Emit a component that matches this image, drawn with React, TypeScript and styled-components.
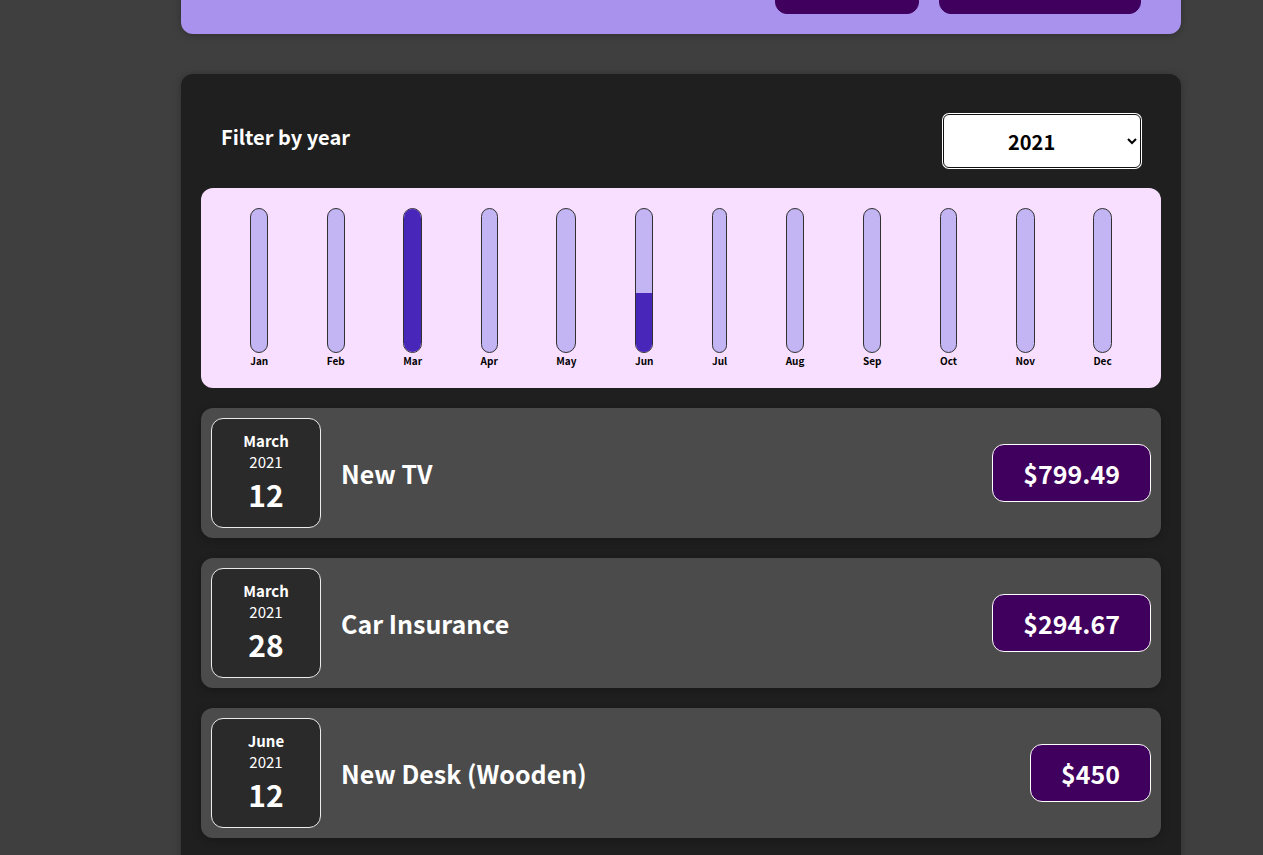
import React from 'react';
import styled, { createGlobalStyle } from 'styled-components';

const GlobalStyle = createGlobalStyle`
  * { box-sizing: border-box; }
  html {
    font-family: 'Noto Sans CJK JP', 'Noto Sans', sans-serif;
    font-size: 20px;
    overflow: hidden;
  }
  body {
    margin: 0;
    background-color: #3f3f3f;
    overflow: hidden;
  }
`;

const Page = styled.div`
  display: block;
  padding-left: 181px;
`;

const NewExpenseCard = styled.div`
  background-color: #a892ee;
  padding: 1rem;
  margin: -77px 0 2rem 0;
  width: 50rem;
  border-radius: 12px;
  box-shadow: 0 1px 8px rgba(0, 0, 0, 0.25);
  display: flex;
  justify-content: flex-end;
`;

const ActionButton = styled.button<{ $w: number }>`
  font: inherit;
  line-height: 29px;
  padding: 1rem 2rem;
  border: 1px solid #40005d;
  background-color: #40005d;
  color: white;
  border-radius: 12px;
  margin-right: 1rem;
  width: ${(p) => p.$w}px;
`;

const ExpensesCard = styled.div`
  padding: 1rem;
  background-color: rgb(31, 31, 31);
  margin: 2rem 0;
  width: 50rem;
  border-radius: 12px;
  box-shadow: 0 1px 8px rgba(0, 0, 0, 0.25);
`;

const Filter = styled.div`
  color: white;
  padding: 0 1rem;
`;

const FilterControl = styled.div`
  display: flex;
  width: 100%;
  align-items: center;
  justify-content: space-between;
  margin: 1rem 0;
`;

const FilterLabel = styled.label`
  font-weight: bold;
  margin-bottom: 0.5rem;
`;

const YearSelect = styled.select`
  font: inherit;
  font-weight: bold;
  padding: 0.5rem 3rem;
  border-radius: 6px;
  border: 1px solid #111;
  box-shadow: 0 0 0 1px #fff;
  background: #fff;
  color: #000;
  height: 54px;
  width: 198px;
`;

const Chart = styled.div`
  padding: 1rem;
  border-radius: 12px;
  background-color: #f8dfff;
  text-align: center;
  display: flex;
  justify-content: space-around;
  height: 10rem;
`;

const ChartBar = styled.div`
  height: 100%;
  display: flex;
  flex-direction: column;
  align-items: center;
`;

const BarInner = styled.div`
  height: 100%;
  width: 100%;
  border: 1px solid #313131;
  border-radius: 12px;
  background-color: #c3b4f3;
  overflow: hidden;
  display: flex;
  flex-direction: column;
  justify-content: flex-end;
`;

const BarFill = styled.div`
  background-color: #4826b9;
  width: 100%;
`;

const BarLabel = styled.div`
  font-weight: bold;
  font-size: 0.5rem;
  text-align: center;
`;

const Item = styled.div`
  display: flex;
  justify-content: space-between;
  align-items: center;
  box-shadow: 0 2px 8px rgba(0, 0, 0, 0.25);
  padding: 0.5rem;
  margin: 1rem 0;
  border-radius: 12px;
  background-color: #4b4b4b;
`;

const DateBox = styled.div`
  display: flex;
  flex-direction: column;
  width: 5.5rem;
  height: 5.5rem;
  border: 1px solid #ececec;
  background-color: #2a2a2a;
  color: white;
  border-radius: 12px;
  align-items: center;
  justify-content: center;
`;

const DateMonth = styled.div`
  font-size: 0.75rem;
  font-weight: bold;
`;

const DateYear = styled.div`
  font-size: 0.75rem;
`;

const DateDay = styled.div`
  font-size: 1.5rem;
  font-weight: bold;
`;

const Description = styled.div`
  display: flex;
  flex-direction: row;
  align-items: center;
  justify-content: flex-start;
  flex: 1;
`;

const Title = styled.h2`
  flex: 1;
  margin: 0 1rem;
  color: white;
  font-size: 1.25rem;
`;

const Price = styled.div`
  font-size: 1.25rem;
  font-weight: bold;
  color: white;
  background-color: #40005d;
  border: 1px solid white;
  padding: 0.5rem 1.5rem;
  border-radius: 12px;
`;

const expenses = [
  { id: 'e1', title: 'New TV', amount: 799.49, date: new Date(2021, 2, 12) },
  { id: 'e2', title: 'Car Insurance', amount: 294.67, date: new Date(2021, 2, 28) },
  { id: 'e3', title: 'New Desk (Wooden)', amount: 450, date: new Date(2021, 5, 12) },
];

const months = ['Jan', 'Feb', 'Mar', 'Apr', 'May', 'Jun', 'Jul', 'Aug', 'Sep', 'Oct', 'Nov', 'Dec'];
const monthNames = ['January', 'February', 'March', 'April', 'May', 'June', 'July', 'August', 'September', 'October', 'November', 'December'];

export default function App() {
  const totals = months.map((_, i) =>
    expenses.filter((e) => e.date.getMonth() === i).reduce((s, e) => s + e.amount, 0)
  );
  const max = Math.max(...totals);

  return (
    <>
      <GlobalStyle />
      <Page>
        <NewExpenseCard>
          <ActionButton $w={144}>Cancel</ActionButton>
          <ActionButton $w={202}>Add Expense</ActionButton>
        </NewExpenseCard>
        <ExpensesCard>
          <Filter>
            <FilterControl>
              <FilterLabel>Filter by year</FilterLabel>
              <YearSelect defaultValue="2021">
                <option value="2022">2022</option>
                <option value="2021">2021</option>
                <option value="2020">2020</option>
                <option value="2019">2019</option>
              </YearSelect>
            </FilterControl>
          </Filter>
          <Chart>
            {months.map((m, i) => (
              <ChartBar key={m}>
                <BarInner>
                  <BarFill style={{ height: `${max > 0 ? Math.round((totals[i] / max) * 100) : 0}%` }} />
                </BarInner>
                <BarLabel>{m}</BarLabel>
              </ChartBar>
            ))}
          </Chart>
          {expenses.map((e) => (
            <Item key={e.id}>
              <Description>
                <DateBox>
                  <DateMonth>{monthNames[e.date.getMonth()]}</DateMonth>
                  <DateYear>{e.date.getFullYear()}</DateYear>
                  <DateDay>{e.date.getDate()}</DateDay>
                </DateBox>
                <Title>{e.title}</Title>
              </Description>
              <Price>${e.amount}</Price>
            </Item>
          ))}
        </ExpensesCard>
      </Page>
    </>
  );
}
